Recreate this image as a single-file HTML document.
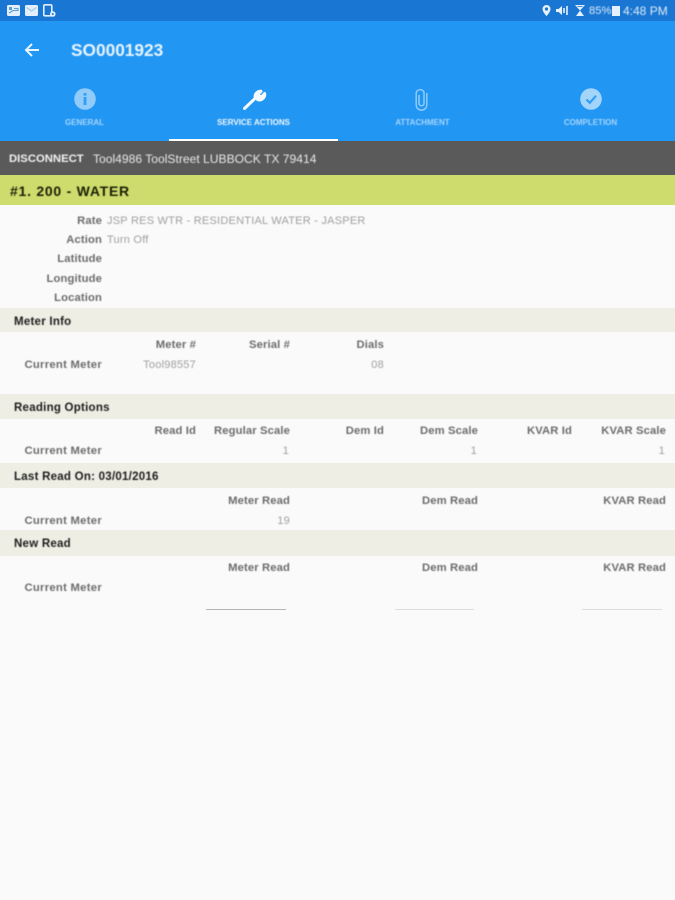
<!DOCTYPE html>
<html>
<head>
<meta charset="utf-8">
<style>
html,body{margin:0;padding:0;background:#fafafa}
#p{position:relative;width:675px;height:900px;overflow:hidden;background:#fafafa;font-family:"Liberation Sans",sans-serif}
.b{position:absolute}
.t{position:absolute;white-space:nowrap;line-height:14px;height:14px;font-size:11px;filter:blur(.4px)}
.l{color:#6c6c6c;font-weight:bold;text-align:right;font-size:11.25px;letter-spacing:.12px}
.c{letter-spacing:.29px}
.v{color:#a0a0a0;font-size:11px;letter-spacing:.23px}
.r{text-align:right}
.h{color:#1c1c1c;font-weight:bold;font-size:11.5px;left:14px;letter-spacing:.25px}
.tab{position:absolute;top:117px;height:12px;line-height:12px;font-size:8px;font-weight:bold;text-align:center;color:#a6d5fb;filter:blur(.4px);white-space:nowrap}
svg{position:absolute;overflow:visible;filter:blur(.35px)}
#w{position:absolute;left:0;top:1px;width:675px;height:640px}
</style>
</head>
<body>
<div id="p">
<div class="b" style="left:0;top:0;width:675px;height:21px;background:#1976d2"></div>
<div class="b" style="left:0;top:21px;width:675px;height:120px;background:#2196f3"></div>
<div class="b" style="left:169px;top:139px;width:169px;height:2px;background:#fff"></div>
<div class="b" style="left:0;top:141px;width:675px;height:34px;background:#5a5a5a"></div>
<div class="b" style="left:0;top:175px;width:675px;height:30px;background:#cddc6c"></div>
<div class="b" style="left:0;top:308px;width:675px;height:24px;background:#eeeee4"></div>
<div class="b" style="left:0;top:394px;width:675px;height:25px;background:#eeeee4"></div>
<div class="b" style="left:0;top:463px;width:675px;height:25px;background:#eeeee4"></div>
<div class="b" style="left:0;top:530px;width:675px;height:26px;background:#eeeee4"></div>

<!-- status bar left icons -->
<svg style="left:7px;top:5px" width="13" height="11" viewBox="0 0 13 11"><rect width="13" height="11" rx="1.5" fill="#e3effa"/><rect x="2" y="2" width="3" height="3" fill="#5d9bdc"/><path d="M2 8L6 5.5H11V3.5H7" stroke="#5d9bdc" stroke-width="1.1" fill="none"/></svg>
<svg style="left:25px;top:5px" width="13" height="11" viewBox="0 0 13 11"><rect width="13" height="11" rx="1.5" fill="#e3effa"/><path d="M1.5 2.5L6.5 6L11.5 2.5" stroke="#a6c8ec" stroke-width="1.2" fill="none"/></svg>
<svg style="left:43px;top:4px" width="13" height="13" viewBox="0 0 13 13"><rect x=".8" y=".8" width="8" height="11" rx="1.2" fill="none" stroke="#e3effa" stroke-width="1.6"/><circle cx="9.8" cy="10" r="2.8" fill="#e3effa"/><circle cx="9.8" cy="10" r="1" fill="#1976d2"/></svg>

<!-- status bar right -->
<svg style="left:542px;top:5px" width="9" height="11" viewBox="0 0 9 11"><path d="M4.5 0A4 4 0 0 0 .5 4C.5 7 4.5 11 4.5 11S8.5 7 8.5 4A4 4 0 0 0 4.5 0Z" fill="#e6f0fa"/><circle cx="4.5" cy="4" r="1.6" fill="#1976d2"/></svg>
<svg style="left:556px;top:5px" width="13" height="11" viewBox="0 0 13 11"><path d="M0 4H2.5L6 1V10L2.5 7H0Z" fill="#e6f0fa"/><path d="M8 3V8M11 1V10" stroke="#e6f0fa" stroke-width="1.6"/></svg>
<svg style="left:575px;top:5px" width="10" height="11" viewBox="0 0 10 11"><path d="M0 0H10L5 5.5ZM5 5.5L9 11H1Z" fill="#e6f0fa"/><path d="M2.5 1.5H7.5" stroke="#1976d2" stroke-width=".8"/></svg>
<div class="t" style="left:589px;top:4px;color:#dcebf9;font-size:11.2px;line-height:14px">85%</div>
<div class="b" style="left:612px;top:6px;width:8px;height:10px;background:#e6f0fa"></div>
<div class="t" style="left:623px;top:4px;color:#dcebf9;font-size:12px;line-height:14px">4:48 PM</div>

<!-- app bar -->
<svg style="left:24px;top:42px" width="16" height="16" viewBox="0 0 16 16"><path d="M15 8H2M8 2L2 8L8 14" stroke="#e8f4fe" stroke-width="2" fill="none"/></svg>
<div class="t" style="left:71px;top:40px;height:20px;line-height:20px;font-size:17.3px;font-weight:bold;color:#e8f4fe">SO0001923</div>

<!-- tabs -->
<svg style="left:74px;top:88px" width="22" height="22" viewBox="0 0 22 22"><circle cx="11" cy="11" r="10.8" fill="#90cbf9"/><rect x="9.6" y="9" width="2.8" height="8" fill="#2f9ef4"/><rect x="9.6" y="5" width="2.8" height="2.6" fill="#2f9ef4"/></svg>
<svg style="left:242px;top:88px" width="24" height="24" viewBox="0 0 24 24"><path d="M2.5 20.5L13 10.5M13.4 10.3C12.2 7 14.6 3 19 3.2L16 6.5L17.5 8.5L20 8.5L22.6 5.5C23.4 9.5 19.5 13 15.6 11.6" stroke="#f4faff" stroke-width="3" fill="#f4faff" stroke-linecap="round" stroke-linejoin="round"/></svg>
<svg style="left:415px;top:88px" width="13" height="23" viewBox="0 0 13 23"><path d="M4 7V15.5C4 18.5 9 18.5 9 15.5V5C9 .5 1.2 .5 1.2 5.5V16.5C1.2 24 11.8 24 11.8 16.5V5" stroke="#90cbf9" stroke-width="1.5" fill="none"/></svg>
<svg style="left:580px;top:88px" width="22" height="22" viewBox="0 0 22 22"><circle cx="11" cy="11" r="10.8" fill="#a3d4fa"/><path d="M6.5 11.5L9.8 14.8L16 7.8" stroke="#2f9ef4" stroke-width="2.2" fill="none"/></svg>
<div class="tab" style="left:0;width:169px">GENERAL</div>
<div class="tab" style="left:169px;width:169px;color:#f0f8ff">SERVICE ACTIONS</div>
<div class="tab" style="left:338px;width:169px">ATTACHMENT</div>
<div class="tab" style="left:506px;width:169px">COMPLETION</div>

<!-- dark bar -->
<div class="t" style="left:9px;top:152px;color:#f2f2f2;font-weight:bold;font-size:11.3px">DISCONNECT</div>
<div class="t" style="left:93px;top:152px;color:#e8e8e8;font-size:12.1px">Tool4986 ToolStreet LUBBOCK TX 79414</div>

<!-- green bar -->
<div class="t" style="left:10px;top:184px;color:#1c1f08;font-weight:bold;font-size:14px;letter-spacing:.75px">#1. 200 - WATER</div>

<div id="w">
<!-- detail -->
<div class="t l" style="left:0;width:102px;top:213px">Rate</div>
<div class="t v" style="left:107px;top:213px">JSP RES WTR - RESIDENTIAL WATER - JASPER</div>
<div class="t l" style="left:0;width:102px;top:232px">Action</div>
<div class="t v" style="left:107px;top:232px">Turn Off</div>
<div class="t l" style="left:0;width:102px;top:251px">Latitude</div>
<div class="t l" style="left:0;width:102px;top:271px">Longitude</div>
<div class="t l" style="left:0;width:102px;top:290px">Location</div>

<!-- meter info -->
<div class="t h" style="top:314px">Meter Info</div>
<div class="t l" style="left:0;width:196px;top:337px">Meter #</div>
<div class="t l" style="left:0;width:290px;top:337px">Serial #</div>
<div class="t l" style="left:0;width:384px;top:337px">Dials</div>
<div class="t l c" style="left:0;width:102px;top:357px">Current Meter</div>
<div class="t v r" style="left:0;width:196px;top:357px">Tool98557</div>
<div class="t v r" style="left:0;width:384px;top:357px">08</div>

<!-- reading options -->
<div class="t h" style="top:400px">Reading Options</div>
<div class="t l" style="left:0;width:196px;top:423px">Read Id</div>
<div class="t l" style="left:0;width:290px;top:423px">Regular Scale</div>
<div class="t l" style="left:0;width:384px;top:423px">Dem Id</div>
<div class="t l" style="left:0;width:478px;top:423px">Dem Scale</div>
<div class="t l" style="left:0;width:572px;top:423px">KVAR Id</div>
<div class="t l" style="left:0;width:666px;top:423px">KVAR Scale</div>
<div class="t l c" style="left:0;width:102px;top:443px">Current Meter</div>
<div class="t v r" style="left:0;width:289px;top:443px">1</div>
<div class="t v r" style="left:0;width:477px;top:443px">1</div>
<div class="t v r" style="left:0;width:665px;top:443px">1</div>

<!-- last read -->
<div class="t h" style="top:469px">Last Read On: 03/01/2016</div>
<div class="t l" style="left:0;width:290px;top:493px">Meter Read</div>
<div class="t l" style="left:0;width:478px;top:493px">Dem Read</div>
<div class="t l" style="left:0;width:666px;top:493px">KVAR Read</div>
<div class="t l c" style="left:0;width:102px;top:513px">Current Meter</div>
<div class="t v r" style="left:0;width:290px;top:513px">19</div>

<!-- new read -->
<div class="t h" style="top:536px">New Read</div>
<div class="t l" style="left:0;width:290px;top:560px">Meter Read</div>
<div class="t l" style="left:0;width:478px;top:560px">Dem Read</div>
<div class="t l" style="left:0;width:666px;top:560px">KVAR Read</div>
<div class="t l c" style="left:0;width:102px;top:580px">Current Meter</div>
</div>
<div class="b" style="left:206px;top:609px;width:80px;height:1px;background:#b4b4b4"></div>
<div class="b" style="left:395px;top:609px;width:79px;height:1px;background:#dcdcdc"></div>
<div class="b" style="left:582px;top:609px;width:80px;height:1px;background:#dcdcdc"></div>
</div>
</body>
</html>
